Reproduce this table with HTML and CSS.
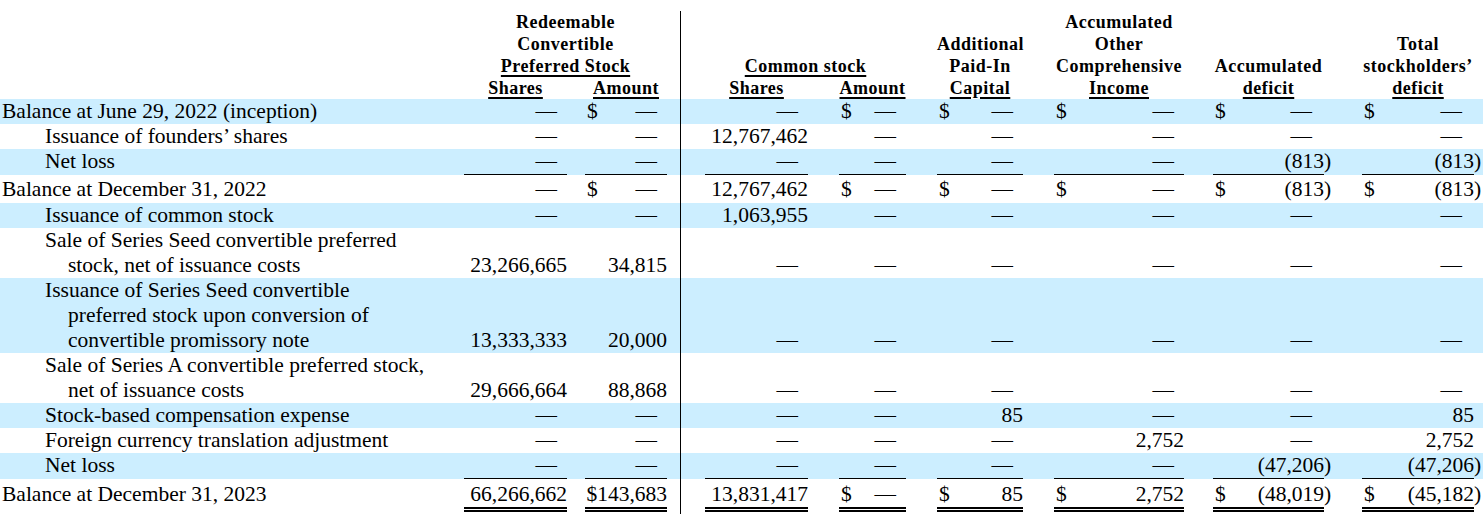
FILE: index.html
```html
<!DOCTYPE html>
<html lang="en">
<head>
<meta charset="utf-8">
<title>Statement of Stockholders' Deficit</title>
<link rel="stylesheet" href="styles.css">
</head>
<body>
<table class="tbl">
  <colgroup>
    <col class="c-label">
    <col class="c-ps">
    <col class="c-g18">
    <col class="c-pa">
    <col class="c-va">
    <col class="c-vb">
    <col class="c-cs">
    <col class="c-g31">
    <col class="c-ca">
    <col class="c-g31">
    <col class="c-apic">
    <col class="c-g31">
    <col class="c-aoci">
    <col class="c-g29">
    <col class="c-def">
    <col class="c-g38">
    <col class="c-tot">
    <col class="c-g9">
  </colgroup>
  <thead>
    <tr>
      <th rowspan="2"></th>
      <th colspan="3">Redeemable<br>Convertible<br><span class="u">Preferred Stock</span></th>
      <th rowspan="2" class="vl"></th>
      <th rowspan="2"></th>
      <th colspan="3"><span class="u">Common stock</span></th>
      <th rowspan="2"></th>
      <th rowspan="2">Additional<br>Paid-In<br><span class="u">Capital</span></th>
      <th rowspan="2"></th>
      <th rowspan="2">Accumulated<br>Other<br>Comprehensive<br><span class="u">Income</span></th>
      <th rowspan="2"></th>
      <th rowspan="2">Accumulated<br><span class="u">deficit</span></th>
      <th rowspan="2"></th>
      <th rowspan="2" class="tot-h">Total<br>stockholders’<br><span class="u">deficit</span></th>
      <th rowspan="2"></th>
    </tr>
    <tr>
      <th><span class="u">Shares</span></th>
      <th></th>
      <th><span class="u">Amount</span></th>
      <th><span class="u">Shares</span></th>
      <th></th>
      <th><span class="u">Amount</span></th>
    </tr>
  </thead>
  <tbody>
    <tr class="b">
      <td class="lbl">Balance at June 29, 2022 (inception)</td>
      <td class="n"><span class="dash">—</span></td><td></td>
      <td class="n"><span class="cur">$</span><span class="dash">—</span></td>
      <td class="vl"></td><td></td>
      <td class="n"><span class="dash">—</span></td><td></td>
      <td class="n"><span class="cur">$</span><span class="dash">—</span></td><td></td>
      <td class="n"><span class="cur">$</span><span class="dash">—</span></td><td></td>
      <td class="n"><span class="cur">$</span><span class="dash">—</span></td><td></td>
      <td class="n"><span class="cur">$</span><span class="dash dp">—</span></td><td></td>
      <td class="n"><span class="cur">$</span><span class="dash dp">—</span></td><td></td>
    </tr>
    <tr>
      <td class="ind">Issuance of founders’ shares</td>
      <td class="n"><span class="dash">—</span></td><td></td>
      <td class="n"><span class="dash">—</span></td>
      <td class="vl"></td><td></td>
      <td class="n">12,767,462</td><td></td>
      <td class="n"><span class="dash">—</span></td><td></td>
      <td class="n"><span class="dash">—</span></td><td></td>
      <td class="n"><span class="dash">—</span></td><td></td>
      <td class="n"><span class="dash dp">—</span></td><td></td>
      <td class="n"><span class="dash dp">—</span></td><td></td>
    </tr>
    <tr class="b ul">
      <td class="ind">Net loss</td>
      <td class="n"><span class="dash">—</span></td><td></td>
      <td class="n"><span class="dash">—</span></td>
      <td class="vl"></td><td></td>
      <td class="n"><span class="dash">—</span></td><td></td>
      <td class="n"><span class="dash">—</span></td><td></td>
      <td class="n"><span class="dash">—</span></td><td></td>
      <td class="n"><span class="dash">—</span></td><td></td>
      <td class="n">(813</td><td class="p">)</td>
      <td class="n">(813</td><td class="p">)</td>
    </tr>
    <tr class="after">
      <td class="lbl">Balance at December 31, 2022</td>
      <td class="n"><span class="dash">—</span></td><td></td>
      <td class="n"><span class="cur">$</span><span class="dash">—</span></td>
      <td class="vl"></td><td></td>
      <td class="n">12,767,462</td><td></td>
      <td class="n"><span class="cur">$</span><span class="dash">—</span></td><td></td>
      <td class="n"><span class="cur">$</span><span class="dash">—</span></td><td></td>
      <td class="n"><span class="cur">$</span><span class="dash">—</span></td><td></td>
      <td class="n"><span class="cur">$</span>(813</td><td class="p">)</td>
      <td class="n"><span class="cur">$</span>(813</td><td class="p">)</td>
    </tr>
    <tr class="b">
      <td class="ind">Issuance of common stock</td>
      <td class="n"><span class="dash">—</span></td><td></td>
      <td class="n"><span class="dash">—</span></td>
      <td class="vl"></td><td></td>
      <td class="n">1,063,955</td><td></td>
      <td class="n"><span class="dash">—</span></td><td></td>
      <td class="n"><span class="dash">—</span></td><td></td>
      <td class="n"><span class="dash">—</span></td><td></td>
      <td class="n"><span class="dash dp">—</span></td><td></td>
      <td class="n"><span class="dash dp">—</span></td><td></td>
    </tr>
    <tr>
      <td class="ind">Sale of Series Seed convertible preferred<br>stock, net of issuance costs</td>
      <td class="n">23,266,665</td><td></td>
      <td class="n">34,815</td>
      <td class="vl"></td><td></td>
      <td class="n"><span class="dash">—</span></td><td></td>
      <td class="n"><span class="dash">—</span></td><td></td>
      <td class="n"><span class="dash">—</span></td><td></td>
      <td class="n"><span class="dash">—</span></td><td></td>
      <td class="n"><span class="dash dp">—</span></td><td></td>
      <td class="n"><span class="dash dp">—</span></td><td></td>
    </tr>
    <tr class="b">
      <td class="ind">Issuance of Series Seed convertible<br>preferred stock upon conversion of<br>convertible promissory note</td>
      <td class="n">13,333,333</td><td></td>
      <td class="n">20,000</td>
      <td class="vl"></td><td></td>
      <td class="n"><span class="dash">—</span></td><td></td>
      <td class="n"><span class="dash">—</span></td><td></td>
      <td class="n"><span class="dash">—</span></td><td></td>
      <td class="n"><span class="dash">—</span></td><td></td>
      <td class="n"><span class="dash dp">—</span></td><td></td>
      <td class="n"><span class="dash dp">—</span></td><td></td>
    </tr>
    <tr>
      <td class="ind">Sale of Series A convertible preferred stock,<br>net of issuance costs</td>
      <td class="n">29,666,664</td><td></td>
      <td class="n">88,868</td>
      <td class="vl"></td><td></td>
      <td class="n"><span class="dash">—</span></td><td></td>
      <td class="n"><span class="dash">—</span></td><td></td>
      <td class="n"><span class="dash">—</span></td><td></td>
      <td class="n"><span class="dash">—</span></td><td></td>
      <td class="n"><span class="dash dp">—</span></td><td></td>
      <td class="n"><span class="dash dp">—</span></td><td></td>
    </tr>
    <tr class="b">
      <td class="ind">Stock-based compensation expense</td>
      <td class="n"><span class="dash">—</span></td><td></td>
      <td class="n"><span class="dash">—</span></td>
      <td class="vl"></td><td></td>
      <td class="n"><span class="dash">—</span></td><td></td>
      <td class="n"><span class="dash">—</span></td><td></td>
      <td class="n">85</td><td></td>
      <td class="n"><span class="dash">—</span></td><td></td>
      <td class="n"><span class="dash dp">—</span></td><td></td>
      <td class="n">85</td><td></td>
    </tr>
    <tr>
      <td class="ind">Foreign currency translation adjustment</td>
      <td class="n"><span class="dash">—</span></td><td></td>
      <td class="n"><span class="dash">—</span></td>
      <td class="vl"></td><td></td>
      <td class="n"><span class="dash">—</span></td><td></td>
      <td class="n"><span class="dash">—</span></td><td></td>
      <td class="n"><span class="dash">—</span></td><td></td>
      <td class="n">2,752</td><td></td>
      <td class="n"><span class="dash dp">—</span></td><td></td>
      <td class="n">2,752</td><td></td>
    </tr>
    <tr class="b ul">
      <td class="ind">Net loss</td>
      <td class="n"><span class="dash">—</span></td><td></td>
      <td class="n"><span class="dash">—</span></td>
      <td class="vl"></td><td></td>
      <td class="n"><span class="dash">—</span></td><td></td>
      <td class="n"><span class="dash">—</span></td><td></td>
      <td class="n"><span class="dash">—</span></td><td></td>
      <td class="n"><span class="dash">—</span></td><td></td>
      <td class="n">(47,206</td><td class="p">)</td>
      <td class="n">(47,206</td><td class="p">)</td>
    </tr>
    <tr class="after dbl">
      <td class="lbl">Balance at December 31, 2023</td>
      <td class="n">66,266,662</td><td></td>
      <td class="n">$143,683</td>
      <td class="vl"></td><td></td>
      <td class="n">13,831,417</td><td></td>
      <td class="n"><span class="cur">$</span><span class="dash">—</span></td><td></td>
      <td class="n"><span class="cur">$</span>85</td><td></td>
      <td class="n"><span class="cur">$</span>2,752</td><td></td>
      <td class="n"><span class="cur">$</span>(48,019</td><td class="p">)</td>
      <td class="n"><span class="cur">$</span>(45,182</td><td class="p">)</td>
    </tr>
    <tr class="tail">
      <td colspan="4"></td>
      <td class="vl"></td>
      <td colspan="13"></td>
    </tr>
  </tbody>
</table>
</body>
</html>
```

FILE: styles.css
```css
body {
  margin: 0;
  background: #ffffff;
  color: #000000;
  font-family: "Liberation Serif", "Times New Roman", serif;
}

.tbl {
  margin-top: 11px;
  width: 1483px;
  table-layout: fixed;
  border-collapse: separate;
  border-spacing: 0;
  font-size: 21.5px;
  line-height: 25px;
}

.c-label { width: 464px; }
.c-ps { width: 103px; }
.c-g18 { width: 18px; }
.c-pa { width: 82px; }
.c-va { width: 14px; }
.c-vb { width: 24px; }
.c-cs { width: 103px; }
.c-g31 { width: 31px; }
.c-ca { width: 67px; }
.c-apic { width: 86px; }
.c-aoci { width: 130px; }
.c-g29 { width: 29px; }
.c-def { width: 111px; }
.c-g38 { width: 38px; }
.c-tot { width: 112px; }
.c-g9 { width: 9px; }

.tbl th,
.tbl td {
  padding: 0;
  white-space: nowrap;
}

.tbl thead th {
  font-size: 18px;
  line-height: 22px;
  font-weight: bold;
  letter-spacing: 0.5px;
  text-align: center;
  vertical-align: bottom;
}

.u {
  text-decoration: underline;
  text-decoration-thickness: 1.5px;
  text-underline-offset: 3px;
}

.vl {
  border-right: 1px solid #000000;
}

tr.b {
  background: #cceeff;
}

td.lbl {
  padding-left: 2px;
  vertical-align: top;
}

td.ind {
  padding-left: 68px;
  text-indent: -23px;
  vertical-align: top;
}

td.n {
  text-align: right;
  vertical-align: bottom;
}

td.p {
  text-align: left;
  vertical-align: bottom;
}

.cur {
  float: left;
  padding-left: 2px;
}

.dash {
  padding-right: 10px;
}

.dash.dp {
  padding-right: 12px;
}

tr.ul td.n {
  border-bottom: 1px solid #000000;
}

tr.ul td.p {
  border-bottom: 1px solid transparent;
}

tr.after td {
  padding-top: 2px;
  padding-bottom: 1px;
}

tr.dbl td {
  padding-top: 3px;
  padding-bottom: 0;
}

tr.dbl td.n {
  border-bottom: 5px double #000000;
}

tr.dbl td.p {
  border-bottom: 5px solid transparent;
}

tr.tail td {
  height: 10px;
}
```
